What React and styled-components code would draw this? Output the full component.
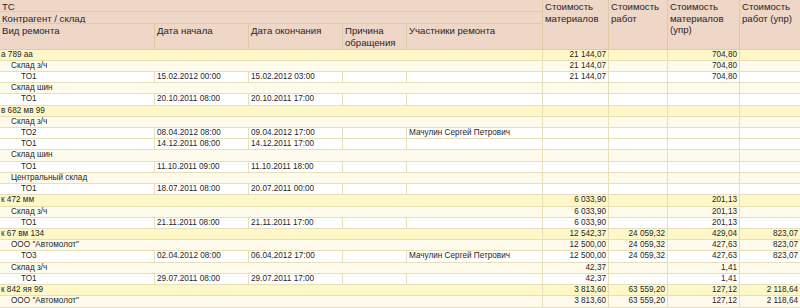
import React from 'react';
import styled, { createGlobalStyle } from 'styled-components';

const GlobalStyle = createGlobalStyle`
  html, body {
    margin: 0;
    padding: 0;
    background: #ffffff;
    overflow: hidden;
  }
  body {
    font-family: "Liberation Sans", Arial, sans-serif;
    color: #1f1f1f;
  }
`;

const COLS = '155px 94px 94px 64px 136px 66px 59px 72px 60px';

const ROWS = [
  { kind: 'group', label: 'а 789 аа', m: '21 144,07', mu: '704,80' },
  { kind: 'sub', label: 'Склад з/ч', m: '21 144,07', mu: '704,80' },
  { kind: 'item', label: 'ТО1', start: '15.02.2012 00:00', end: '15.02.2012 03:00', m: '21 144,07', mu: '704,80' },
  { kind: 'sub', label: 'Склад шин' },
  { kind: 'item', label: 'ТО1', start: '20.10.2011 08:00', end: '20.10.2011 17:00' },
  { kind: 'group', label: 'в 682 мв 99' },
  { kind: 'sub', label: 'Склад з/ч' },
  { kind: 'item', label: 'ТО2', start: '08.04.2012 08:00', end: '09.04.2012 17:00', who: 'Мачулин Сергей Петрович' },
  { kind: 'item', label: 'ТО1', start: '14.12.2011 08:00', end: '14.12.2011 17:00' },
  { kind: 'sub', label: 'Склад шин' },
  { kind: 'item', label: 'ТО1', start: '11.10.2011 09:00', end: '11.10.2011 18:00' },
  { kind: 'sub', label: 'Центральный склад' },
  { kind: 'item', label: 'ТО1', start: '18.07.2011 08:00', end: '20.07.2011 00:00' },
  { kind: 'group', label: 'к 472 мм', m: '6 033,90', mu: '201,13' },
  { kind: 'sub', label: 'Склад з/ч', m: '6 033,90', mu: '201,13' },
  { kind: 'item', label: 'ТО1', start: '21.11.2011 08:00', end: '21.11.2011 17:00', m: '6 033,90', mu: '201,13' },
  { kind: 'group', label: 'к 67 вм 134', m: '12 542,37', w: '24 059,32', mu: '429,04', wu: '823,07' },
  { kind: 'sub', label: 'ООО "Автомолот"', m: '12 500,00', w: '24 059,32', mu: '427,63', wu: '823,07' },
  { kind: 'item', label: 'ТО3', start: '02.04.2012 08:00', end: '06.04.2012 17:00', who: 'Мачулин Сергей Петрович', m: '12 500,00', w: '24 059,32', mu: '427,63', wu: '823,07' },
  { kind: 'sub', label: 'Склад з/ч', m: '42,37', mu: '1,41' },
  { kind: 'item', label: 'ТО1', start: '29.07.2011 08:00', end: '29.07.2011 17:00', m: '42,37', mu: '1,41' },
  { kind: 'group', label: 'к 842 яя 99', m: '3 813,60', w: '63 559,20', mu: '127,12', wu: '2 118,64' },
  { kind: 'sub', label: 'ООО "Автомолот"', m: '3 813,60', w: '63 559,20', mu: '127,12', wu: '2 118,64' },
];

const BG = { group: '#fef8c8', sub: '#fffbec', item: '#ffffff' };
const INDENT = { group: 1, sub: 11, item: 21 };

function App() {
  return (
    <>
      <GlobalStyle />
      <Report>
        <Header>
          <HeadCell $col="1 / 6" $row="1">ТС</HeadCell>
          <HeadCell $col="1 / 6" $row="2">Контрагент / склад</HeadCell>
          <HeadCell $row="3">Вид ремонта</HeadCell>
          <HeadCell $row="3">Дата начала</HeadCell>
          <HeadCell $row="3">Дата окончания</HeadCell>
          <HeadCell $row="3">Причина обращения</HeadCell>
          <HeadCell $row="3">Участники ремонта</HeadCell>
          <HeadCell $col="6" $row="1 / 4">Стоимость материалов</HeadCell>
          <HeadCell $col="7" $row="1 / 4">Стоимость работ</HeadCell>
          <HeadCell $col="8" $row="1 / 4">Стоимость материалов (упр)</HeadCell>
          <HeadCell $col="9" $row="1 / 4" $last>Стоимость работ (упр)</HeadCell>
        </Header>

        {ROWS.map((r, i) => (
          <Row key={i} $kind={r.kind}>
            {r.kind === 'item' ? (
              <>
                <Cell $indent={INDENT.item}>{r.label}</Cell>
                <Cell>{r.start}</Cell>
                <Cell>{r.end}</Cell>
                <Cell />
                <Cell>{r.who || ''}</Cell>
              </>
            ) : (
              <Cell $span $indent={INDENT[r.kind]}>{r.label}</Cell>
            )}
            <Num>{r.m || ''}</Num>
            <Num>{r.w || ''}</Num>
            <Num>{r.mu || ''}</Num>
            <Num $last>{r.wu || ''}</Num>
          </Row>
        ))}
      </Report>
    </>
  );
}

export default App;

const Report = styled.div`
  width: 800px;
  height: 308px;
  overflow: hidden;
`;

const Header = styled.div`
  display: grid;
  grid-template-columns: ${COLS};
  grid-template-rows: 12.3px 12.2px 25px;
  background-color: #efd7c8;
  border-bottom: 1px solid #dccba6;
  box-sizing: border-box;
  height: 49.5px;
`;

const HeadCell = styled.div`
  grid-column: ${(p) => p.$col || 'auto'};
  grid-row: ${(p) => p.$row};
  box-sizing: border-box;
  padding: 1px 3px 0 2px;
  font-size: 9.6px;
  line-height: 11.6px;
  color: #1f1f1f;
  overflow: hidden;
  border-right: ${(p) => (p.$last ? 'none' : '1px solid #dccba6')};
  border-bottom: ${(p) => (p.$row === '3' || p.$row === '1 / 4' ? 'none' : '1px solid #dccba6')};
`;

const Row = styled.div`
  display: grid;
  grid-template-columns: ${COLS};
  height: 11.23px;
  box-sizing: border-box;
  border-bottom: 1px solid #e6dfb8;
  background-color: ${(p) => BG[p.$kind]};
`;

const Cell = styled.div`
  grid-column: ${(p) => (p.$span ? '1 / 6' : 'auto')};
  box-sizing: border-box;
  padding-left: ${(p) => (p.$indent != null ? p.$indent : 2)}px;
  border-right: 1px solid #e6dfb8;
  font-size: 8.2px;
  line-height: 10.2px;
  white-space: nowrap;
  overflow: hidden;
`;

const Num = styled.div`
  box-sizing: border-box;
  padding-right: 2px;
  text-align: right;
  border-right: ${(p) => (p.$last ? 'none' : '1px solid #e6dfb8')};
  font-size: 8.2px;
  line-height: 10.2px;
  white-space: nowrap;
  overflow: hidden;
`;
